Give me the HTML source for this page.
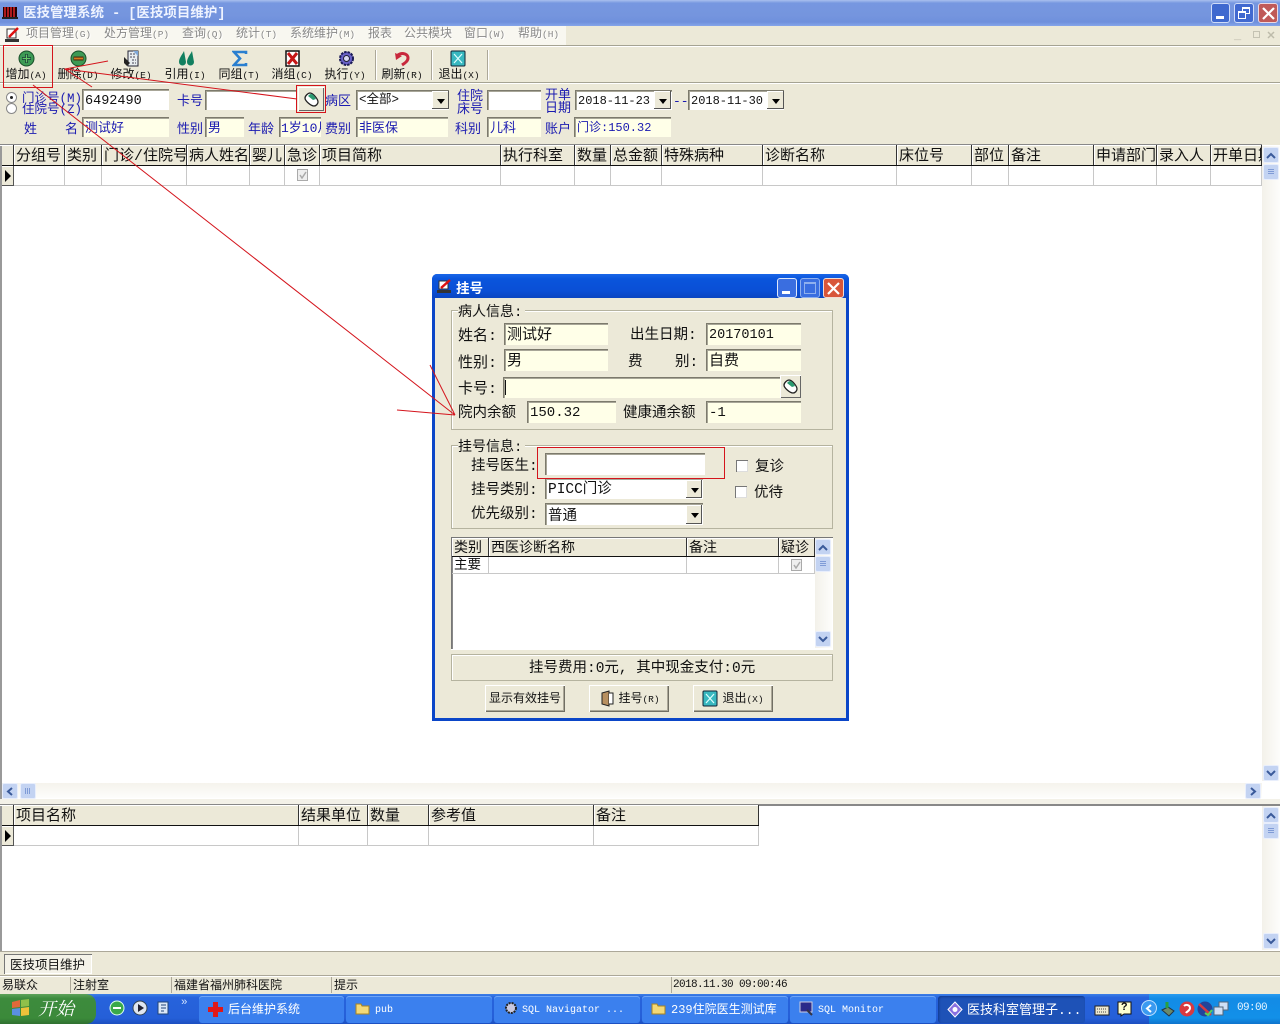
<!DOCTYPE html>
<html><head><meta charset="utf-8"><style>
html,body{margin:0;padding:0}
body{width:1280px;height:1024px;overflow:hidden;position:relative;background:#fff;font-family:"Liberation Mono","WenQuanYi Zen Hei","Noto Sans CJK SC",monospace;font-size:14px;color:#111}
div,span,svg{position:absolute;box-sizing:border-box}
i{font-style:normal;font-size:9.5px}
.t{white-space:nowrap;line-height:1;transform:translateY(2px)}
.b{color:#1a1ab0}
.p{background:#ece9d8}
.s{box-shadow:inset 1px 1px 0 #7c7a6c,inset 2px 2px 0 #a8a698;white-space:nowrap;overflow:hidden;padding:2px 0 0 3px;line-height:20px}
.y{background:#ffffe8}.w{background:#fff}
.h{top:0;height:20px;background:#ece9d8;border-right:1px solid #333;font-size:15px;line-height:23px;padding-left:2px;white-space:nowrap;overflow:hidden;box-shadow:inset 1px 1px 0 #fff}
.c{top:21px;height:20px;border-right:1px solid #c8c8c8;border-bottom:1px solid #c8c8c8}
.cb{width:21px;height:20px;background:#ece9d8;box-shadow:inset -1px -1px 0 #555,inset 1px 1px 0 #fff}
.cb:after{content:"";position:absolute;left:5px;top:8px;border:4px solid transparent;border-top:5px solid #000;border-bottom:0}
.tb{font-size:12px;width:60px;text-align:center;top:69px;line-height:13px;white-space:nowrap}
.m{top:28px;font-size:12px;color:#888;white-space:nowrap;line-height:13px;text-shadow:1px 1px 0 #fff}
.sb{width:16px;height:16px;background:#c3d3f2;border:1px solid #e8eefc;border-radius:2px}
.sb svg{left:2px;top:3px}
.th:after{content:"";position:absolute;left:4px;top:4px;width:6px;height:6px;background:repeating-linear-gradient(#7f9bd6 0 1px,transparent 1px 2px)}
.tv:after{content:"";position:absolute;left:4px;top:4px;width:6px;height:6px;background:repeating-linear-gradient(90deg,#7f9bd6 0 1px,transparent 1px 2px)}
.g{border:1px solid #b5b39f;box-shadow:inset 1px 1px 0 #fff}
.btn{top:685px;height:27px;background:#ece9d8;box-shadow:inset 1px 1px 0 #fff,inset -1px -1px 0 #716f64,inset -2px -2px 0 #aca899;font-size:12px;line-height:29px;text-align:center;white-space:nowrap}
.chk{width:12px;height:12px;background:#fff;box-shadow:inset 1px 1px 0 #777,inset -1px -1px 0 #ddd}
.task{top:996px;height:27px;background:#3b80ee;border-radius:3px;color:#fff;font-size:12px;line-height:29px;white-space:nowrap;box-shadow:inset 0 1px 0 #6ea5f7}
</style></head><body>

<!-- title -->
<div style="left:0;top:0;width:1280px;height:26px;background:linear-gradient(#a9c0ee,#7697e0 12%,#7595de 60%,#6f90dc 85%,#85a5ea)"></div>
<svg style="left:2px;top:5px" width="16" height="15"><rect x="1" y="2" width="14" height="10" fill="#200"/><path d="M3 2v10M6 2v10M9 2v10M12 2v10" stroke="#d22" stroke-width="1.5"/><path d="M0 13h16" stroke="#222" stroke-width="2"/></svg>
<div class="t" style="left:23px;top:6px;font-size:13.5px;color:#eef3ff;font-weight:bold">医技管理系统 - [医技项目维护]</div>
<div style="left:1211px;top:3px;width:19px;height:20px;background:#3f69cf;border:1px solid #cfdcf8;border-radius:3px"><div style="left:4px;top:12px;width:8px;height:3px;background:#fff"></div></div>
<div style="left:1234px;top:3px;width:20px;height:20px;background:#4169d0;border:1px solid #cfdcf8;border-radius:3px"><div style="left:7px;top:3px;width:8px;height:7px;border:1px solid #fff;border-top-width:2px"></div><div style="left:3px;top:7px;width:8px;height:8px;border:1px solid #fff;border-top-width:2px;background:#4169d0"></div></div>
<div style="left:1258px;top:3px;width:20px;height:20px;background:#c05a58;border:1px solid #ecd8e0;border-radius:3px"><svg style="left:3px;top:3px" width="13" height="13"><path d="M1 1L12 12M12 1L1 12" stroke="#fff" stroke-width="2.2"/></svg></div>

<!-- menu -->
<div class="p" style="left:0;top:26px;width:1280px;height:20px"></div>
<div style="left:0;top:26px;width:566px;height:19px;background:#f8f7f0"></div>
<svg style="left:3px;top:27px" width="18" height="17"><path d="M4 2h9v9H4z" fill="#fff" stroke="#333"/><path d="M6 10L15 1" stroke="#d11" stroke-width="2.5"/><path d="M2 12h14v3H2z" fill="#333"/></svg>
<div class="m" style="left:26px">项目管理<i>(G)</i></div>
<div class="m" style="left:104px">处方管理<i>(P)</i></div>
<div class="m" style="left:182px">查询<i>(Q)</i></div>
<div class="m" style="left:236px">统计<i>(T)</i></div>
<div class="m" style="left:290px">系统维护<i>(M)</i></div>
<div class="m" style="left:368px">报表</div>
<div class="m" style="left:404px">公共模块</div>
<div class="m" style="left:464px">窗口<i>(W)</i></div>
<div class="m" style="left:518px">帮助<i>(H)</i></div>
<div class="t" style="left:1234px;top:28px;font-size:12px;color:#bdbbaa;letter-spacing:5px">_</div>
<div style="left:1253px;top:31px;width:7px;height:7px;border:1px solid #c4c2b2"></div>
<svg style="left:1267px;top:31px" width="8" height="8"><path d="M1 1L7 7M7 1L1 7" stroke="#bdbbaa" stroke-width="1.5"/></svg>

<!-- toolbar -->
<div class="p" style="left:0;top:46px;width:1280px;height:99px"></div>
<div style="left:0;top:45px;width:1280px;height:1px;background:#a5a393"></div>
<div style="left:0;top:46px;width:1280px;height:1px;background:#fff"></div>
<div style="left:0;top:82px;width:1280px;height:1px;background:#a5a393"></div>
<div style="left:0;top:83px;width:1280px;height:1px;background:#fff"></div>
<div style="left:375px;top:50px;width:2px;height:30px;border-left:1px solid #aca899;border-right:1px solid #fff"></div>
<div style="left:431px;top:50px;width:2px;height:30px;border-left:1px solid #aca899;border-right:1px solid #fff"></div>
<div style="left:487px;top:50px;width:2px;height:30px;border-left:1px solid #aca899;border-right:1px solid #fff"></div>

<svg style="left:18px;top:50px" width="17" height="17"><circle cx="8.5" cy="8.5" r="7.5" fill="#3d9a55" stroke="#174d28"/><path d="M8.5 4v9M4 8.500h9" stroke="#123" stroke-width="2.4"/><path d="M8.500 4.500v8M4.500 8.500h8" stroke="#65c968" stroke-width="1.200"/></svg>
<svg style="left:70px;top:50px" width="17" height="17"><circle cx="8.500" cy="8.500" r="7.500" fill="#3d9a55" stroke="#174d28"/><path d="M3.500 8.500h10" stroke="#4a2a10" stroke-width="4"/><path d="M4 8.500h9" stroke="#d87a20" stroke-width="1.800"/></svg>
<svg style="left:123px;top:50px" width="17" height="17"><path d="M5 1h10v15H5z" fill="#e8edf0" stroke="#223"/><path d="M7 4h6M7 7h6M9 10h4M9 13h4" stroke="#445" stroke-dasharray="2 1"/><path d="M1 7l6 6-3 3-3-3z" fill="#222"/><path d="M10 1h5v5z" fill="#7fa8d8"/></svg>
<svg style="left:178px;top:50px" width="17" height="17"><path d="M1 12C1 8 4 5 6 1l2 11a3.500 3.500 0 0 1-7 0zM9 12C9 8 12 5 14 1l2 11a3.500 3.500 0 0 1-7 0z" fill="#128060"/></svg>
<svg style="left:232px;top:50px" width="16" height="17"><path d="M14 4V2H2l6 6.500L2 15h12v-2" fill="none" stroke="#2a7fd0" stroke-width="2.600"/></svg>
<svg style="left:284px;top:50px" width="17" height="17"><path d="M2 1h13v15H2z" fill="#fff" stroke="#111" stroke-width="1.500"/><path d="M4 3l9 11M13 3L4 14" stroke="#c51616" stroke-width="3"/></svg>
<svg style="left:338px;top:50px" width="17" height="17"><circle cx="8.500" cy="8.500" r="6.500" fill="#6a62c8" stroke="#1a1a55" stroke-width="2" stroke-dasharray="2.500 1"/><circle cx="8.500" cy="8.500" r="3" fill="#d8d8f5" stroke="#223"/></svg>
<svg style="left:394px;top:51px" width="17" height="16"><path d="M3 5C6 1 14 2 14 7c0 3-3 5-6 7" fill="none" stroke="#c8283c" stroke-width="3"/><path d="M1 2l1 7 6-4z" fill="#c8283c"/></svg>
<svg style="left:450px;top:50px" width="16" height="17"><rect x="1" y="1" width="14" height="15" rx="1" fill="#38b8c0" stroke="#123"/><path d="M4 4l8 9M12 4l-8 9" stroke="#dff" stroke-width="1.200"/></svg>

<div class="tb" style="left:-4px">增加<i>(A)</i></div>
<div class="tb" style="left:48px">删除<i>(D)</i></div>
<div class="tb" style="left:101px">修改<i>(E)</i></div>
<div class="tb" style="left:155px">引用<i>(I)</i></div>
<div class="tb" style="left:209px">同组<i>(T)</i></div>
<div class="tb" style="left:262px">消组<i>(C)</i></div>
<div class="tb" style="left:315px">执行<i>(Y)</i></div>
<div class="tb" style="left:372px">刷新<i>(R)</i></div>
<div class="tb" style="left:429px">退出<i>(X)</i></div>

<!-- filter rows -->
<div style="left:6px;top:92px;width:11px;height:11px;border-radius:50%;background:#fff;border:1px solid #888"><div style="left:3px;top:3px;width:3px;height:3px;background:#222;border-radius:50%"></div></div>
<div style="left:6px;top:103px;width:11px;height:11px;border-radius:50%;background:#fff;border:1px solid #888"></div>
<div class="t b" style="left:22px;top:91px;font-size:12.500px">门诊号(M)</div>
<div class="t b" style="left:22px;top:102px;font-size:12.500px">住院号(Z)</div>
<div class="s w" style="left:82px;top:89px;width:87px;height:21px;font-size:13.500px;padding-top:3px">6492490</div>
<div class="t b" style="left:177px;top:93px;font-size:13px">卡号</div>
<div class="s w" style="left:205px;top:90px;width:91px;height:20px"></div>
<div style="left:298px;top:87px;width:26px;height:24px;background:#ece9d8;box-shadow:inset 1px 1px 0 #fff,inset -1px -1px 0 #666"></div>
<svg style="left:303px;top:91px" width="17" height="16"><path d="M2 7c0-2 3-5 5-5 3 0 8 6 8 9 0 2-2 4-4 4-3 0-9-5-9-8z" fill="#fff" stroke="#222" stroke-width="1.300"/><path d="M5 5c1-1 2-2 3-2 2 0 4 3 5 5l-3 1z" fill="#2a9a70"/></svg>
<div class="t b" style="left:325px;top:93px;font-size:13px">病区</div>
<div class="s w" style="left:356px;top:90px;width:93px;height:20px;font-size:12.500px;line-height:16px">&lt;全部&gt;</div><div class="cb" style="left:432px;top:91px;width:17px;height:18px"></div>
<div class="t b" style="left:457px;top:88px;font-size:13px;line-height:13px">住院<br>床号</div>
<div class="s w" style="left:487px;top:90px;width:54px;height:20px"></div>
<div class="t b" style="left:545px;top:87px;font-size:13px;line-height:13px">开单<br>日期</div>
<div class="s w" style="left:575px;top:90px;width:97px;height:20px;font-size:12px;padding-top:1px">2018-11-23</div><div class="cb" style="left:654px;top:91px;width:17px;height:18px"></div>
<div class="t b" style="left:673px;top:93px;font-size:13px">--</div>
<div class="s w" style="left:688px;top:90px;width:96px;height:20px;font-size:12px;padding-top:1px">2018-11-30</div><div class="cb" style="left:767px;top:91px;width:17px;height:18px"></div>

<div class="t b" style="left:24px;top:121px;font-size:13px">姓</div>
<div class="t b" style="left:65px;top:121px;font-size:13px">名</div>
<div class="s y" style="left:82px;top:117px;width:87px;height:20px;font-size:13px;color:#1a1ab0">测试好</div>
<div class="t b" style="left:177px;top:121px;font-size:13px">性别</div>
<div class="s y" style="left:205px;top:117px;width:39px;height:20px;font-size:13px;color:#1a1ab0">男</div>
<div class="t b" style="left:248px;top:121px;font-size:13px">年龄</div>
<div class="s y" style="left:279px;top:117px;width:42px;height:20px;font-size:13px;color:#1a1ab0;padding-left:2px">1岁10月</div>
<div class="t b" style="left:325px;top:121px;font-size:13px">费别</div>
<div class="s y" style="left:356px;top:117px;width:92px;height:20px;font-size:13px;color:#1a1ab0">非医保</div>
<div class="t b" style="left:455px;top:121px;font-size:13px">科别</div>
<div class="s y" style="left:487px;top:117px;width:54px;height:20px;font-size:13px;color:#1a1ab0">儿科</div>
<div class="t b" style="left:545px;top:121px;font-size:13px">账户</div>
<div class="s y" style="left:574px;top:117px;width:97px;height:20px;font-size:12px;color:#1a1ab0;padding-top:1px">门诊:150.32</div>

<!-- main grid -->
<div style="left:0;top:144px;width:1262px;height:2px;background:#888"></div>
<div style="left:0;top:145px;width:1262px;height:41px;overflow:hidden">
<div class="h" style="left:0;width:14px"></div>
<div class="h" style="left:14px;width:51px">分组号</div>
<div class="h" style="left:65px;width:37px">类别</div>
<div class="h" style="left:102px;width:85px">门诊/住院号</div>
<div class="h" style="left:187px;width:63px">病人姓名</div>
<div class="h" style="left:250px;width:35px">婴儿</div>
<div class="h" style="left:285px;width:35px">急诊</div>
<div class="h" style="left:320px;width:181px">项目简称</div>
<div class="h" style="left:501px;width:74px">执行科室</div>
<div class="h" style="left:575px;width:36px">数量</div>
<div class="h" style="left:611px;width:51px">总金额</div>
<div class="h" style="left:662px;width:101px">特殊病种</div>
<div class="h" style="left:763px;width:134px">诊断名称</div>
<div class="h" style="left:897px;width:75px">床位号</div>
<div class="h" style="left:972px;width:37px">部位</div>
<div class="h" style="left:1009px;width:85px">备注</div>
<div class="h" style="left:1094px;width:63px">申请部门</div>
<div class="h" style="left:1157px;width:54px">录入人</div>
<div class="h" style="left:1211px;width:51px">开单日期</div>
<div style="left:0;top:20px;width:1262px;height:1px;background:#111"></div>
<div class="c" style="left:14px;width:51px"></div><div class="c" style="left:65px;width:37px"></div><div class="c" style="left:102px;width:85px"></div><div class="c" style="left:187px;width:63px"></div><div class="c" style="left:250px;width:35px"></div><div class="c" style="left:285px;width:35px"></div><div class="c" style="left:320px;width:181px"></div><div class="c" style="left:501px;width:74px"></div><div class="c" style="left:575px;width:36px"></div><div class="c" style="left:611px;width:51px"></div><div class="c" style="left:662px;width:101px"></div><div class="c" style="left:763px;width:134px"></div><div class="c" style="left:897px;width:75px"></div><div class="c" style="left:972px;width:37px"></div><div class="c" style="left:1009px;width:85px"></div><div class="c" style="left:1094px;width:63px"></div><div class="c" style="left:1157px;width:54px"></div><div class="c" style="left:1211px;width:51px"></div>
<div style="left:0;top:21px;width:14px;height:20px;background:#ece9d8;box-shadow:inset -1px -1px 0 #555,inset 1px 1px 0 #fff"></div>
<div style="left:5px;top:25px;border:6px solid transparent;border-left:6px solid #000;border-right:0"></div>
<div style="left:297px;top:24px;width:11px;height:12px;border:1px solid #aaa;background:#eee"><svg style="left:1px;top:1px" width="8" height="8"><path d="M1 4l2 3 4-6" fill="none" stroke="#aaa" stroke-width="1.500"/></svg></div>
</div>
<div style="left:0;top:146px;width:2px;height:656px;background:#999"></div>

<!-- right scrollbar -->
<div style="left:1262px;top:146px;width:18px;height:635px;background:linear-gradient(90deg,#f3f1ea,#fdfdfb)"></div>
<div class="sb" style="left:1263px;top:147px"><svg width="10" height="9"><path d="M1 7l4-4 4 4" fill="none" stroke="#3a5a9a" stroke-width="2"/></svg></div>
<div class="sb th" style="left:1263px;top:164px"></div>
<div class="sb" style="left:1263px;top:765px"><svg width="10" height="9"><path d="M1 2l4 4 4-4" fill="none" stroke="#3a5a9a" stroke-width="2"/></svg></div>
<!-- horizontal scrollbar -->
<div style="left:2px;top:783px;width:1260px;height:15px;background:linear-gradient(#f5f3ec,#fdfdfb)"></div>
<div class="sb" style="left:2px;top:783px"><svg width="10" height="9"><path d="M7 1L3 4.500 7 8" fill="none" stroke="#3a5a9a" stroke-width="2"/></svg></div>
<div class="sb tv" style="left:20px;top:783px"></div>
<div class="sb" style="left:1245px;top:783px"><svg width="10" height="9"><path d="M3 1l4 3.500L3 8" fill="none" stroke="#3a5a9a" stroke-width="2"/></svg></div>
<div style="left:0;top:799px;width:1280px;height:5px;background:#f3f1e8"></div>

<!-- lower grid -->
<div style="left:0;top:804px;width:1280px;height:2px;background:#888"></div>
<div style="left:0;top:805px;width:759px;height:41px;overflow:hidden">
<div class="h" style="left:0;width:14px"></div>
<div class="h" style="left:14px;width:285px">项目名称</div>
<div class="h" style="left:299px;width:69px">结果单位</div>
<div class="h" style="left:368px;width:61px">数量</div>
<div class="h" style="left:429px;width:165px">参考值</div>
<div class="h" style="left:594px;width:165px">备注</div>
<div style="left:0;top:20px;width:759px;height:1px;background:#111"></div>
<div class="c" style="left:14px;width:285px"></div><div class="c" style="left:299px;width:69px"></div><div class="c" style="left:368px;width:61px"></div><div class="c" style="left:429px;width:165px"></div><div class="c" style="left:594px;width:165px"></div>
<div style="left:0;top:21px;width:14px;height:20px;background:#ece9d8;box-shadow:inset -1px -1px 0 #555,inset 1px 1px 0 #fff"></div>
<div style="left:5px;top:25px;border:6px solid transparent;border-left:6px solid #000;border-right:0"></div>
</div>
<div style="left:0;top:806px;width:2px;height:145px;background:#999"></div>
<div style="left:1262px;top:806px;width:18px;height:144px;background:linear-gradient(90deg,#f3f1ea,#fdfdfb)"></div>
<div class="sb" style="left:1263px;top:807px"><svg width="10" height="9"><path d="M1 7l4-4 4 4" fill="none" stroke="#3a5a9a" stroke-width="2"/></svg></div>
<div class="sb th" style="left:1263px;top:823px"></div>
<div class="sb" style="left:1263px;top:933px"><svg width="10" height="9"><path d="M1 2l4 4 4-4" fill="none" stroke="#3a5a9a" stroke-width="2"/></svg></div>

<!-- tab + status -->
<div class="p" style="left:0;top:951px;width:1280px;height:43px"></div>
<div style="left:0;top:951px;width:1280px;height:1px;background:#aca899"></div>
<div style="left:4px;top:954px;width:88px;height:20px;background:#f4f2e8;box-shadow:inset 1px 1px 0 #777,inset -1px -1px 0 #fff;font-size:12.500px;line-height:24px;padding-left:6px;white-space:nowrap;overflow:hidden">医技项目维护</div>
<div style="left:0;top:975px;width:1280px;height:1px;background:#aca899"></div>
<div style="left:0;top:976px;width:1280px;height:1px;background:#fff"></div>
<div class="t" style="left:2px;top:978px;font-size:12px">易联众</div>
<div class="t" style="left:73px;top:978px;font-size:12px">注射室</div>
<div class="t" style="left:174px;top:978px;font-size:12px">福建省福州肺科医院</div>
<div class="t" style="left:334px;top:978px;font-size:12px">提示</div>
<div class="t" style="left:673px;top:978px;font-size:11px;letter-spacing:-.6px">2018.11.30 09:00:46</div>
<div style="left:70px;top:977px;width:1px;height:16px;background:#aca899"></div>
<div style="left:171px;top:977px;width:1px;height:16px;background:#aca899"></div>
<div style="left:331px;top:977px;width:1px;height:16px;background:#aca899"></div>
<div style="left:671px;top:977px;width:1px;height:16px;background:#aca899"></div>

<!-- taskbar -->
<div style="left:0;top:994px;width:1280px;height:30px;background:linear-gradient(#3c7fe8,#2763dc 12%,#255fd8 80%,#1c4fc0)"></div>
<div style="left:0;top:994px;width:96px;height:30px;background:linear-gradient(#5da35a,#3d8b3d 15%,#3b8a3a 80%,#2f7030);border-radius:0 10px 10px 0"></div>
<svg style="left:11px;top:998px" width="20" height="20"><path d="M1 4l8-2v7l-8 1z" fill="#e0683a"/><path d="M10 2l8-1v7l-8 1z" fill="#8fc04a"/><path d="M1 11l8-1v8l-8-1z" fill="#5a90e0"/><path d="M10 10l8-1v8l-8 1z" fill="#eec23a"/></svg>
<div class="t" style="left:38px;top:997px;color:#fff;font-size:18px;font-style:italic;font-family:'Noto Serif CJK SC',serif">开始</div>
<svg style="left:109px;top:1000px" width="16" height="16"><circle cx="8" cy="8" r="7" fill="#3aa94a" stroke="#dfe"/><path d="M4 8h8" stroke="#fff" stroke-width="2"/></svg>
<svg style="left:132px;top:1000px" width="16" height="16"><circle cx="8" cy="8" r="7" fill="#dfe6f0" stroke="#345"/><path d="M6 4l6 4-6 4z" fill="#223"/></svg>
<svg style="left:155px;top:1000px" width="16" height="16"><path d="M3 2h10v12H3z" fill="#dce8f8" stroke="#247"/><path d="M6 5h5M6 8h5M6 11h3" stroke="#247"/></svg>
<div class="t" style="left:181px;top:996px;color:#cfe0ff;font-size:11px">»</div>
<div class="task" style="left:199px;width:145px;padding-left:29px">后台维护系统</div>
<svg style="left:207px;top:1001px" width="17" height="17"><path d="M6 1h5v5h5v5h-5v5H6v-5H1V6h5z" fill="#e01818"/></svg>
<div class="task" style="left:346px;width:146px;padding-left:29px;font-size:10px">pub</div>
<svg style="left:355px;top:1002px" width="15" height="13"><path d="M1 2h5l1 2h7v8H1z" fill="#f4d977" stroke="#a88420"/></svg>
<div class="task" style="left:494px;width:146px;padding-left:28px;font-size:10px">SQL Navigator ...</div>
<svg style="left:504px;top:1001px" width="14" height="14"><circle cx="7" cy="7" r="5" fill="#c8c8e0" stroke="#222" stroke-width="2" stroke-dasharray="2 1"/></svg>
<div class="task" style="left:642px;width:146px;padding-left:29px">239住院医生测试库</div>
<svg style="left:651px;top:1002px" width="15" height="13"><path d="M1 2h5l1 2h7v8H1z" fill="#f4d977" stroke="#a88420"/></svg>
<div class="task" style="left:790px;width:146px;padding-left:28px;font-size:10px">SQL Monitor</div>
<svg style="left:799px;top:1001px" width="15" height="15"><rect x="1" y="1" width="12" height="10" fill="#2a2a8a" stroke="#ccd"/><path d="M8 9l5 5" stroke="#334" stroke-width="2"/></svg>
<div class="task" style="left:938px;width:147px;padding-left:29px;background:#1e52b7;font-size:13px;box-shadow:inset 1px 1px 2px #123a90">医技科室管理子...</div>
<svg style="left:947px;top:1001px" width="16" height="17"><path d="M8 1l7 7.500-7 7.500-7-7.500z" fill="#8a70e0" stroke="#fff"/><circle cx="8" cy="8.500" r="2.500" fill="#fff"/></svg>
<svg style="left:1094px;top:1002px" width="16" height="14"><rect x="1" y="4" width="14" height="9" fill="#eee8d0" stroke="#222"/><path d="M3 7h10M3 10h10" stroke="#444" stroke-dasharray="1 1"/></svg>
<svg style="left:1117px;top:1001px" width="15" height="16"><path d="M1 1h13v12H7l-3 2v-2H1z" fill="#ffffd0" stroke="#111"/></svg>
<div class="t" style="left:1121px;top:1001px;font-size:11px;font-weight:bold;color:#111">?</div>
<div style="left:1149px;top:994px;width:131px;height:30px;background:linear-gradient(#2a9cf0,#138be6 15%,#1290e8 80%,#0f73cc)"></div>
<div style="left:1141px;top:1000px;width:16px;height:16px;border-radius:50%;background:#3b9af0;border:1px solid #bfe0ff"></div>
<svg style="left:1145px;top:1004px" width="8" height="9"><path d="M6 1L2 4.500 6 8" fill="none" stroke="#fff" stroke-width="2"/></svg>
<svg style="left:1160px;top:1001px" width="15" height="16"><path d="M2 9l6-3 6 4-5 5z" fill="#6a8a6a" stroke="#234"/><path d="M7 1v6" stroke="#2aa040" stroke-width="3"/></svg>
<svg style="left:1179px;top:1001px" width="16" height="16"><circle cx="8" cy="8" r="7.500" fill="#d83a40"/><path d="M5 5c2-2 6-1 6 2s-3 3-4 5" fill="none" stroke="#fff" stroke-width="2"/></svg>
<svg style="left:1197px;top:1001px" width="16" height="16"><circle cx="8" cy="8" r="7.500" fill="#23449a"/><path d="M2 3l12 11" stroke="#d83a40" stroke-width="2.500"/><path d="M8 12l3 2 4-5" stroke="#5bd05b" stroke-width="2" fill="none"/></svg>
<svg style="left:1213px;top:1001px" width="16" height="16"><rect x="6" y="1" width="9" height="8" fill="#cfe0f5" stroke="#567"/><rect x="1" y="6" width="9" height="8" fill="#cfe0f5" stroke="#567"/></svg>
<div class="t" style="left:1237px;top:1001px;color:#e8f4ff;font-size:11px;letter-spacing:-.6px">09:00</div>

<!-- dialog -->
<div style="left:432px;top:274px;width:417px;height:447px;background:#0b46c8;border-radius:5px 5px 0 0"></div>
<div style="left:432px;top:274px;width:417px;height:24px;background:linear-gradient(#1a66e8,#0a55dc 20%,#0a4fd6 70%,#0a45c0);border-radius:5px 5px 0 0"></div>
<div class="p" style="left:435px;top:298px;width:411px;height:420px"></div>
<svg style="left:436px;top:279px" width="17" height="16"><path d="M3 2h9v8H3z" fill="#fff" stroke="#333"/><path d="M5 9l9-8" stroke="#d11" stroke-width="2.500"/><path d="M1 11h14v3H1z" fill="#333"/></svg>
<div class="t" style="left:456px;top:282px;color:#fff;font-size:13.500px;font-weight:bold">挂号</div>
<div style="left:777px;top:278px;width:20px;height:20px;background:#3a6ee0;border:1px solid #dfe8fb;border-radius:3px"><div style="left:4px;top:12px;width:8px;height:3px;background:#fff"></div></div>
<div style="left:800px;top:278px;width:20px;height:20px;background:#3a6ee0;border:1px solid #8fb0ee;border-radius:3px"><div style="left:3px;top:3px;width:12px;height:12px;border:1px solid #8fb0ee;border-top-width:2px"></div></div>
<div style="left:823px;top:278px;width:21px;height:20px;background:#d8563a;border:1px solid #f2dcd4;border-radius:3px"><svg style="left:3px;top:3px" width="13" height="13"><path d="M1 1L12 12M12 1L1 12" stroke="#fff" stroke-width="2.200"/></svg></div>

<div class="g" style="left:451px;top:310px;width:382px;height:120px"></div>
<div class="t p" style="left:458px;top:304px;font-size:14px;padding-right:3px">病人信息:</div>
<div class="t" style="left:458px;top:327px;font-size:15px">姓名:</div>
<div class="s y" style="left:504px;top:323px;width:104px;height:22px;font-size:15px;padding-top:3px">测试好</div>
<div class="t" style="left:630px;top:327px;font-size:14.500px">出生日期:</div>
<div class="s y" style="left:706px;top:323px;width:95px;height:22px;font-size:13.500px;padding-top:3px">20170101</div>
<div class="t" style="left:458px;top:354px;font-size:15px">性别:</div>
<div class="s y" style="left:504px;top:349px;width:104px;height:22px;font-size:15px;padding-top:3px">男</div>
<div class="t" style="left:628px;top:354px;font-size:14.500px">费</div>
<div class="t" style="left:675px;top:354px;font-size:14.500px">别:</div>
<div class="s y" style="left:706px;top:349px;width:95px;height:22px;font-size:15px;padding-top:3px">自费</div>
<div class="t" style="left:458px;top:380px;font-size:15px">卡号:</div>
<div class="s y" style="left:503px;top:377px;width:277px;height:21px"></div>
<div style="left:505px;top:380px;width:1px;height:15px;background:#111"></div>
<div style="left:780px;top:375px;width:21px;height:23px;background:#ece9d8;box-shadow:inset 1px 1px 0 #fff,inset -1px -1px 0 #666"></div>
<svg style="left:782px;top:378px" width="17" height="16"><path d="M2 7c0-2 3-5 5-5 3 0 8 6 8 9 0 2-2 4-4 4-3 0-9-5-9-8z" fill="#fff" stroke="#222" stroke-width="1.300"/><path d="M5 5c1-1 2-2 3-2 2 0 4 3 5 5l-3 1z" fill="#2a9a70"/></svg>
<div class="t" style="left:458px;top:405px;font-size:14.500px">院内余额</div>
<div class="s y" style="left:527px;top:401px;width:89px;height:22px;font-size:14px;padding-top:2px">150.32</div>
<div class="t" style="left:623px;top:405px;font-size:14.500px">健康通余额</div>
<div class="s y" style="left:706px;top:401px;width:95px;height:22px;font-size:14px;padding-top:2px">-1</div>

<div class="g" style="left:451px;top:445px;width:382px;height:84px"></div>
<div class="t p" style="left:458px;top:439px;font-size:14px;padding-right:3px">挂号信息:</div>
<div class="t" style="left:471px;top:458px;font-size:14.500px">挂号医生:</div>
<div class="s w" style="left:545px;top:453px;width:160px;height:22px"></div>
<div class="chk" style="left:736px;top:460px"></div>
<div class="t" style="left:755px;top:459px;font-size:14.500px">复诊</div>
<div class="t" style="left:471px;top:482px;font-size:14.500px">挂号类别:</div>
<div class="s w" style="left:545px;top:478px;width:158px;height:21px;font-size:14.500px">PICC门诊</div><div class="cb" style="left:686px;top:480px;width:16px;height:18px"></div>
<div class="chk" style="left:735px;top:486px"></div>
<div class="t" style="left:754px;top:485px;font-size:14.500px">优待</div>
<div class="t" style="left:471px;top:506px;font-size:14.500px">优先级别:</div>
<div class="s w" style="left:545px;top:503px;width:158px;height:22px;font-size:14.500px;padding-top:4px">普通</div><div class="cb" style="left:686px;top:505px;width:16px;height:19px"></div>

<div class="w" style="left:451px;top:537px;width:382px;height:112px;box-shadow:inset 1px 1px 0 #777,inset 2px 0 0 #888,0 1px 0 #fff"></div>
<div style="left:452px;top:538px;width:363px;height:36px;overflow:hidden">
<div class="h" style="left:0;width:37px;height:19px;font-size:14px;line-height:22px">类别</div>
<div class="h" style="left:37px;width:198px;height:19px;font-size:14px;line-height:22px">西医诊断名称</div>
<div class="h" style="left:235px;width:92px;height:19px;font-size:14px;line-height:22px">备注</div>
<div class="h" style="left:327px;width:36px;height:19px;font-size:14px;line-height:22px">疑诊</div>
<div style="left:0;top:18px;width:363px;height:1px;background:#111"></div>
<div class="c" style="left:0;top:19px;width:37px;height:17px;font-size:13.500px;line-height:20px;padding-left:2px">主要</div>
<div class="c" style="left:37px;top:19px;width:198px;height:17px"></div>
<div class="c" style="left:235px;top:19px;width:92px;height:17px"></div>
<div class="c" style="left:327px;top:19px;width:36px;height:17px"></div>
<div style="left:339px;top:21px;width:11px;height:12px;border:1px solid #aaa;background:#eee"><svg style="left:1px;top:1px" width="8" height="8"><path d="M1 4l2 3 4-6" fill="none" stroke="#aaa" stroke-width="1.500"/></svg></div>
</div>
<div style="left:815px;top:538px;width:17px;height:110px;background:linear-gradient(90deg,#f3f1ea,#fdfdfb)"></div>
<div class="sb" style="left:815px;top:539px"><svg width="10" height="9"><path d="M1 7l4-4 4 4" fill="none" stroke="#3a5a9a" stroke-width="2"/></svg></div>
<div class="sb th" style="left:815px;top:556px"></div>
<div class="sb" style="left:815px;top:631px"><svg width="10" height="9"><path d="M1 2l4 4 4-4" fill="none" stroke="#3a5a9a" stroke-width="2"/></svg></div>

<div class="g" style="left:451px;top:654px;width:382px;height:27px"></div>
<div class="t" style="left:529px;top:660px;font-size:14.500px">挂号费用:0元, 其中现金支付:0元</div>
<div class="btn" style="left:485px;width:80px">显示有效挂号</div>
<div class="btn" style="left:589px;width:80px;padding-left:20px">挂号<i>(R)</i></div>
<svg style="left:600px;top:690px" width="15" height="17"><path d="M2 3l7-2v15l-7-2z" fill="#b89060" stroke="#222"/><path d="M9 3h4v11H9" fill="#fff" stroke="#222"/></svg>
<div class="btn" style="left:693px;width:80px;padding-left:20px">退出<i>(X)</i></div>
<svg style="left:702px;top:690px" width="16" height="17"><rect x="1" y="1" width="14" height="15" rx="1" fill="#38b8c0" stroke="#123"/><path d="M4 4l8 9M12 4l-8 9" stroke="#dff" stroke-width="1.200"/></svg>

<!-- red annotations -->
<svg style="left:0;top:0;pointer-events:none" width="1280" height="1024">
<g fill="none" stroke="#d4141c" stroke-width="1">
<rect x="3.500" y="45.500" width="49" height="42"/>
<rect x="296.500" y="85.500" width="29" height="27"/>
<rect x="537.500" y="447.500" width="187" height="31"/>
<path d="M108 61L65 69L92 87M65 69L297 99"/>
<path d="M33 85L455 415M430 365L455 415M397 410L455 415"/>
</g></svg>
</body></html>
